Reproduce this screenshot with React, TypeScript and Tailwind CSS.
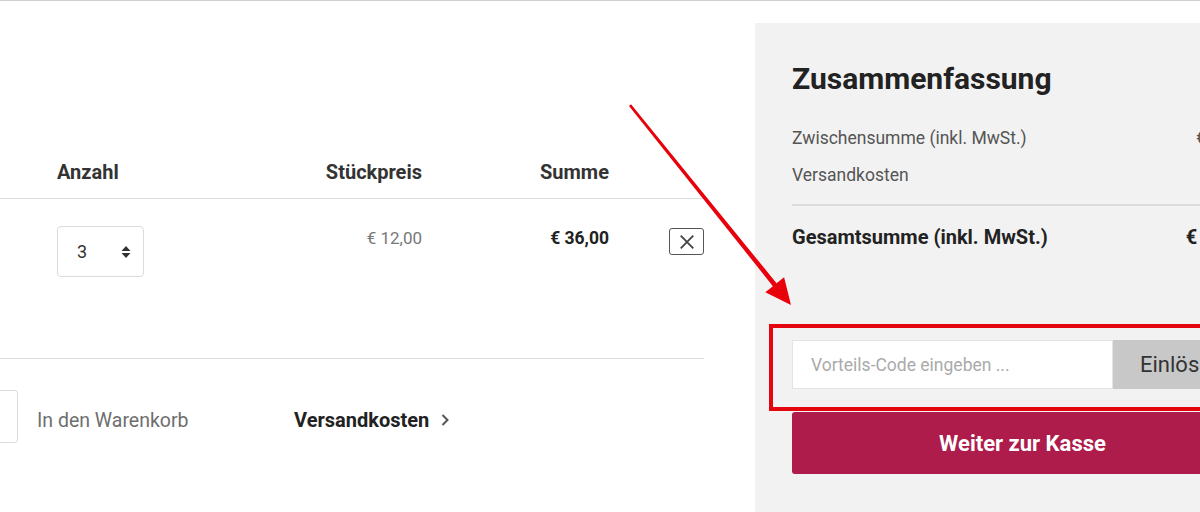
import React from 'react';

const font = { fontFamily: 'Roboto, "Liberation Sans", Arial, sans-serif' };

const QtySelect: React.FC<{ value: number }> = ({ value }) => (
  <div className="w-[87px] h-[51px] border border-[#dcdcdc] rounded-[4px] flex items-center justify-between pl-[19px] pr-[12px] text-[18px] text-[#333]">
    <span>{value}</span>
    <svg width="10" height="14" viewBox="0 0 10 14" fill="#333" aria-hidden="true">
      <path d="M5 1 L9.5 6 L0.5 6 Z" />
      <path d="M5 13 L9.5 8 L0.5 8 Z" />
    </svg>
  </div>
);

const RemoveButton = () => (
  <button className="w-[35px] h-[27px] border border-[#555] rounded-[3px] flex items-center justify-center">
    <svg width="16" height="16" viewBox="0 0 14 14" stroke="#444" strokeWidth="1.6" fill="none" aria-hidden="true">
      <path d="M1.5 1.5 L12.5 12.5 M12.5 1.5 L1.5 12.5" />
    </svg>
  </button>
);

export default function App() {
  return (
    <div className="relative w-[1200px] h-[512px] overflow-hidden bg-white border-t border-[#cfcfcf] flex" style={font}>
      {/* cart table */}
      <div className="w-[755px] flex-none pt-[159px]">
        <div className="w-[704px]">
          <div className="grid grid-cols-[57px_150px_215px_187px_95px] border-b border-[#dedede] pb-[14px] text-[20px] font-bold text-[#333] leading-[24px]">
            <div />
            <div>Anzahl</div>
            <div className="text-right">Stückpreis</div>
            <div className="text-right">Summe</div>
            <div />
          </div>
          <div className="grid grid-cols-[57px_150px_215px_187px_95px] items-start h-[160px] pt-[27px] border-b border-[#dedede] leading-[24px]">
            <div />
            <QtySelect value={3} />
            <div className="text-right text-[17px] text-[#777]">€ 12,00</div>
            <div className="text-right text-[17.5px] font-bold text-[#222]">€ 36,00</div>
            <div className="flex justify-end pt-[2px]">
              <RemoveButton />
            </div>
          </div>
          <div className="flex items-center mt-[31px]">
            <div className="w-[18px] h-[53px] border-y border-r border-[#dcdcdc] rounded-r-[4px]" />
            <div className="w-[276px] pl-[19px] pt-[8px] text-[19.5px] text-[#6e6e6e]">In den Warenkorb</div>
            <div className="flex items-center gap-[12px] pt-[7px] text-[20px] font-bold text-[#222]">
              Versandkosten
              <svg width="8" height="14" viewBox="0 0 8 13" fill="none" stroke="#555" strokeWidth="2" aria-hidden="true">
                <path d="M1.5 1.5 L6.5 6.5 L1.5 11.5" />
              </svg>
            </div>
          </div>
        </div>
      </div>

      {/* summary */}
      <div className="mt-[22px] w-[540px] flex-none bg-[#f2f2f2] pl-[37px] pt-[38px]">
        <div className="w-[461px]">
          <h2 className="text-[30px] leading-[36px] font-bold text-[#222]">Zusammenfassung</h2>
          <div className="mt-[29px] flex justify-between text-[17.5px] leading-[24px] text-[#555]">
            <span>Zwischensumme (inkl. MwSt.)</span>
            <span>€ 36,00</span>
          </div>
          <div className="mt-[13px] flex justify-between text-[17.5px] leading-[24px] text-[#555] pb-[17px] border-b-2 border-[#dcdcdc]">
            <span>Versandkosten</span>
            <span>€ 0,00</span>
          </div>
          <div className="pt-[19px] flex justify-between text-[20px] leading-[24px] font-bold text-[#222]">
            <span>Gesamtsumme (inkl. MwSt.)</span>
            <span>€ 36,00</span>
          </div>
          <div className="mt-[91px] flex h-[49px]">
            <input
              placeholder="Vorteils-Code eingeben ..."
              className="w-[321px] h-full bg-white border border-[#e4e4e4] px-[18px] text-[17.5px] text-[#333] placeholder:text-[#aaa] outline-none"
            />
            <button className="flex-1 bg-[#c8c8c8] text-[22px] text-[#333] text-left pl-[27px]">Einlösen</button>
          </div>
          <button className="mt-[23px] w-full h-[62px] bg-[#ad1c4b] rounded-[3px] text-white text-[22px] font-bold">
            Weiter zur Kasse
          </button>
        </div>
      </div>

      {/* annotation: red frame and arrow */}
      <div className="absolute left-[769px] top-[323px] w-[500px] h-[87px] border-[4px] border-[#e3060f] pointer-events-none" />
      <svg className="absolute left-0 top-0 pointer-events-none" width="1200" height="512" viewBox="0 0 1200 512" aria-hidden="true">
        <polygon
          fill="#e8000b"
          points="631,103.3 776.5,282.2 784.1,276.2 791,304 765.3,291.2 772.9,285.2 629,104.9"
        />
      </svg>
    </div>
  );
}
